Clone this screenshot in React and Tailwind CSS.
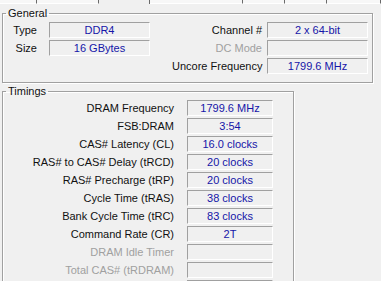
const font = { fontFamily: '"Liberation Sans", Arial, sans-serif' };

const tabs = [
  { w: "w-[37px]" },
  { w: "w-[62px]" },
  { w: "w-[51px]", active: true },
  { w: "w-[93px]" },
  { w: "w-[42px]" },
  { w: "w-[42px]" },
  { w: "flex-1" },
];

const timings = [
  { label: "DRAM Frequency", value: "1799.6 MHz" },
  { label: "FSB:DRAM", value: "3:54" },
  { label: "CAS# Latency (CL)", value: "16.0 clocks" },
  { label: "RAS# to CAS# Delay (tRCD)", value: "20 clocks" },
  { label: "RAS# Precharge (tRP)", value: "20 clocks" },
  { label: "Cycle Time (tRAS)", value: "38 clocks" },
  { label: "Bank Cycle Time (tRC)", value: "83 clocks" },
  { label: "Command Rate (CR)", value: "2T" },
  { label: "DRAM Idle Timer", value: "", disabled: true },
  { label: "Total CAS# (tRDRAM)", value: "", disabled: true },
  { label: "", value: "", disabled: true },
];

function ValueBox({ value, width }) {
  return (
    <div
      className={`${width} h-[16px] border border-t-[#a0a0a0] border-l-[#a0a0a0] border-b-white border-r-white flex items-center justify-center text-[#1515a8] leading-none`}
    >
      {value}
    </div>
  );
}

function Row({ label, value, labelWidth, gap, boxWidth, disabled }) {
  return (
    <div className="flex items-center h-[16px]">
      <div
        className={`${labelWidth} text-right whitespace-nowrap ${
          disabled ? "text-[#a0a0a0]" : "text-[#111]"
        }`}
      >
        {label}
      </div>
      <div className={gap}>
        <ValueBox value={value} width={boxWidth} />
      </div>
    </div>
  );
}

export default function App() {
  return (
    <div
      className="w-[381px] h-[281px] overflow-hidden bg-[#f0f0f0] text-[11px] leading-[13px]"
      style={font}
    >
      {/* tab strip remains */}
      <div className="flex h-[4px]">
        {tabs.map((t, i) => (
          <div
            key={i}
            className={`${t.w} h-[4px] border-r border-r-[#6a6a6a] ${
              t.active ? "bg-[#f0f0f0]" : "bg-[#f7f7f7] border-b border-b-white"
            }`}
          />
        ))}
      </div>

      {/* General */}
      <fieldset className="ml-[2px] mt-[3px] w-[371px] h-[76px] border border-[#a0a0a0] shadow-[inset_1px_1px_0_#fff,1px_1px_0_#fff]">
        <legend className="ml-[3px] px-[2px] text-[#111]">General</legend>
        <div className="flex mt-[2px]">
          <div className="flex flex-col gap-[2px]">
            <Row label="Type" value="DDR4" labelWidth="w-[34px]" gap="ml-[12px]" boxWidth="w-[101px]" />
            <Row label="Size" value="16 GBytes" labelWidth="w-[34px]" gap="ml-[12px]" boxWidth="w-[101px]" />
          </div>
          <div className="ml-auto mr-[4px] flex flex-col gap-[2px]">
            <Row label="Channel #" value="2 x 64-bit" labelWidth="w-[90px]" gap="ml-[5px]" boxWidth="w-[101px]" />
            <Row label="DC Mode" value="" labelWidth="w-[90px]" gap="ml-[5px]" boxWidth="w-[101px]" disabled />
            <Row label="Uncore Frequency" value="1799.6 MHz" labelWidth="w-[90px]" gap="ml-[5px]" boxWidth="w-[101px]" />
          </div>
        </div>
      </fieldset>

      {/* Timings */}
      <fieldset className="ml-[2px] mt-[2px] w-[292px] h-[220px] border border-[#a0a0a0] shadow-[inset_1px_1px_0_#fff,1px_1px_0_#fff]">
        <legend className="ml-[3px] px-[2px] text-[#111]">Timings</legend>
        <div className="flex flex-col gap-[2px] mt-[2px]">
          {timings.map((t, i) => (
            <Row
              key={i}
              label={t.label}
              value={t.value}
              disabled={t.disabled}
              labelWidth="w-[171px]"
              gap="ml-[13px]"
              boxWidth="w-[86px]"
            />
          ))}
        </div>
      </fieldset>
    </div>
  );
}
